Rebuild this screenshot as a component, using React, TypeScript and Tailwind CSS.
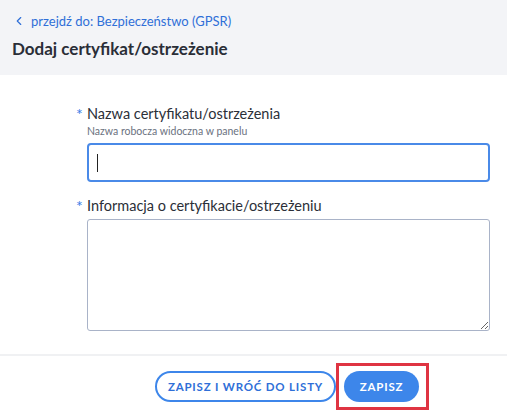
import { ChevronLeft } from 'lucide-react';

export default function App() {
  return (
    <div className="w-[507px] h-[414px] bg-white font-['Lato',sans-serif] text-[#2b2f38] overflow-hidden flex flex-col">
      <div className="bg-[#f3f4f7] h-[75px] px-[12px] pt-[13px]">
        <a className="flex items-center gap-[5px] text-[13px] text-[#2f6fd8] leading-[16px]">
          <ChevronLeft className="w-[14px] h-[14px]" strokeWidth={2} />
          <span>przejdź do: Bezpieczeństwo (GPSR)</span>
        </a>
        <h1 className="mt-[9px] text-[17px] font-bold leading-[22px] text-[#2a2e37]">
          Dodaj certyfikat/ostrzeżenie
        </h1>
      </div>

      <div className="flex-1 pl-[76px] pr-[17px] pt-[30px]">
        <div className="flex items-start">
          <span className="w-[11px] text-[#3b7be6] text-[16px] leading-[18px]">*</span>
          <div className="flex-1">
            <div className="text-[14.5px] leading-[18px]">Nazwa certyfikatu/ostrzeżenia</div>
            <div className="text-[10.5px] leading-[16px] text-[#6b7280]">Nazwa robocza widoczna w panelu</div>
            <div className="mt-[4px] h-[39px] rounded-[4px] border-2 border-[#4a8ae8] flex items-center px-[8px]">
              <span className="w-px h-[18px] bg-[#222]" />
            </div>
          </div>
        </div>

        <div className="flex items-start mt-[15px]">
          <span className="w-[11px] text-[#3b7be6] text-[16px] leading-[18px]">*</span>
          <div className="flex-1">
            <div className="text-[14.5px] leading-[18px]">Informacja o certyfikacie/ostrzeżeniu</div>
            <textarea className="mt-[4px] block w-full h-[112px] rounded-[3px] border border-[#a9b3c8] outline-none" />
          </div>
        </div>
      </div>

      <div className="border-t-2 border-[#f0f1f3] h-[60px] flex justify-center items-start pt-[15px] gap-[8px]">
        <button className="h-[31px] w-[181px] rounded-full border-2 border-[#3d86ea] text-[#2f6fd8] text-[11.5px] font-bold tracking-[0.8px] ml-[67px]">
          ZAPISZ I WRÓĆ DO LISTY
        </button>
        <div className="relative">
          <button className="h-[31px] w-[75px] rounded-full bg-[#3d86ea] text-white text-[11.5px] font-bold tracking-[0.8px]">
            ZAPISZ
          </button>
          <div className="absolute -left-[8px] -top-[8px] w-[93px] h-[47px] border-[3px] border-[#df3442]" />
        </div>
      </div>
    </div>
  );
}
